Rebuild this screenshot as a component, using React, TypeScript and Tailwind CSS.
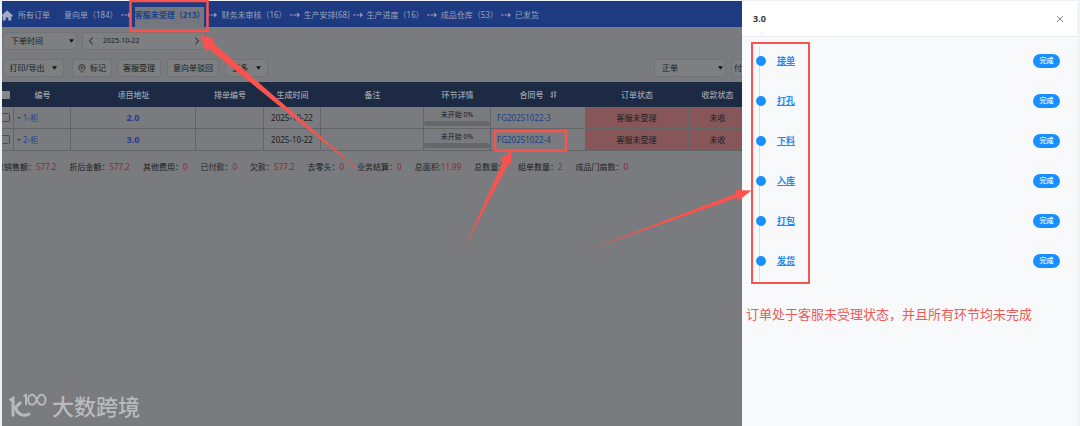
import { useState } from "react";

/**
 * Order management page with the process drawer open.
 * The list behind the drawer is shown in its dimmed colours.
 */

interface OrderRow {
  no:       string;
  address:  string;
  date:     string;
  contract: string;
}

const NAV_STEPS = [
  { label: "意向单（184）" },
  { label: "客服未受理（213）", active: true },
  { label: "财务未审核（16）" },
  { label: "生产安排(68)" },
  { label: "生产进度（16）" },
  { label: "成品仓库（53）" },
  { label: "已发货" },
];

const ORDERS: OrderRow[] = [
  { no: "1-柜", address: "2.0", date: "2025-10-22", contract: "FG20251022-3" },
  { no: "2-柜", address: "3.0", date: "2025-10-22", contract: "FG20251022-4" },
];

const TOTALS = [
  ["总销售额：", "577.2"],
  ["折后金额：", "577.2"],
  ["其他费用：", "0"],
  ["已付款：", "0"],
  ["欠款：", "577.2"],
  ["去零头：", "0"],
  ["业务结算：", "0"],
  ["总面积:", "11.99"],
  ["总数量:", "3"],
  ["组单数量：", "2"],
  ["成品门扇数：", "0"],
];

const PROCESS = ["接单", "打孔", "下料", "入库", "打包", "发货"];

function Caret({ className = "" }: { className?: string }) {
  return (
    <svg viewBox="0 0 6 4" className={`h-1 w-[5px] fill-[#151515] ${className}`} aria-hidden="true">
      <path d="M0 0h6L3 4z" />
    </svg>
  );
}

function StepArrow() {
  return (
    <svg viewBox="0 0 10 6" className="h-[6px] w-[10px] shrink-0" aria-hidden="true">
      <path d="M0 3h2.6M3.6 3h2.6" stroke="#98a3bd" strokeWidth="1" />
      <path d="M6.3 3h3.2M7.4 .9 9.6 3 7.4 5.1z" fill="#98a3bd" stroke="#98a3bd" strokeWidth=".5" />
    </svg>
  );
}

function TopNav() {
  return (
    <nav className="flex h-[26px] items-center bg-[#1e3a80] pt-[2px] text-[#98a3bd] whitespace-nowrap">
      <a href="#home" aria-label="首页" className="-ml-px w-[17px] shrink-0">
        <svg viewBox="0 0 12 11" className="h-[11px] w-3 fill-[#a3adc2]" aria-hidden="true">
          <path d="M6 .3 0 5.8l.8.9.9-.7v4.6h3V7.4h2.6v3.2h3V6l.9.7.8-.9z" />
        </svg>
      </a>
      <a href="#all" className="mr-[14px]">所有订单</a>
      <div className="flex items-center gap-[3px] self-stretch">
        {NAV_STEPS.map((step, i) => (
          <div key={step.label} className="flex items-center gap-1 self-stretch">
            {i > 0 && <StepArrow />}
            {step.active ? (
              <a href="#step" className="mt-[4px] flex items-center self-stretch bg-[#74777e] pb-1 font-bold text-[#1f3f8c]">
                {step.label}
              </a>
            ) : (
              <a href="#step">{step.label}</a>
            )}
          </div>
        ))}
      </div>
    </nav>
  );
}

const boxClass = "h-[18px] shrink-0 rounded-[2px] border border-[#717376] bg-[#7e7f80]";

function FilterSelect({ label, value, width }: { label: string; value: string; width: string }) {
  return (
    <div className={`relative ${width}`}>
      <select aria-label={label} className={`${boxClass} w-full appearance-none pl-[7px] text-[#1b1b1b]`}>
        <option>{value}</option>
      </select>
      <Caret className="pointer-events-none absolute right-[3px] top-[7px]" />
    </div>
  );
}

function Toolbar() {
  const [date, setDate] = useState("2025-10-22");
  const button = `${boxClass} flex items-center justify-center`;

  return (
    <div className="pt-[5px] pb-[5px] text-[#1b1b1b]">
      <div className="flex gap-[5px] pl-px">
        <FilterSelect label="时间类型" value="下单时间" width="w-[74px]" />
        <div className={`${boxClass} flex w-[124px] items-center px-[6px]`}>
          <button type="button" aria-label="前一天">
            <svg viewBox="0 0 4 8" className="h-2 w-1 fill-none stroke-[#1b1b1b]"><path d="M3.6.5.6 4l3 3.5" /></svg>
          </button>
          <input
            aria-label="日期"
            value={date}
            onChange={(e) => setDate(e.target.value)}
            className="ml-[10px] min-w-0 flex-1 text-[7px]"
          />
          <button type="button" aria-label="后一天">
            <svg viewBox="0 0 4 8" className="h-2 w-1 fill-none stroke-[#1b1b1b]"><path d="m.4.5 3 3.5-3 3.5" /></svg>
          </button>
        </div>
      </div>

      <div className="mt-[9px] flex whitespace-nowrap pl-px">
        <button type="button" className={`${button} w-[61px] gap-2`}>打印/导出 <Caret /></button>
        <button type="button" className={`${button} ml-2 w-10 gap-1`}>
          <svg viewBox="0 0 8 10" className="h-[9px] w-2 fill-none stroke-[#222]" strokeWidth=".8" aria-hidden="true">
            <path d="M4 9.300C2 7.300.6 5.600.6 3.900a3.400 3.400 0 0 1 6.800 0C7.400 5.600 6 7.300 4 9.300z" />
            <circle cx="4" cy="3.900" r="1.300" />
          </svg>
          标记
        </button>
        <button type="button" className={`${button} ml-[5px] w-[44px]`}>客服受理</button>
        <button type="button" className={`${button} ml-[6px] w-[52px]`}>意向单驳回</button>
        <button type="button" className={`${button} ml-[6px] w-[43px] gap-2`}>更多 <Caret /></button>
        <div className="ml-auto flex gap-[5px]">
          <FilterSelect label="订单类型" value="正单" width="w-[72px]" />
          <button type="button" className={`${boxClass} w-[11px] overflow-hidden rounded-r-none border-r-0 pl-[2px] text-left`}>付</button>
        </div>
      </div>
    </div>
  );
}

function OrderTable() {
  const cell = "h-[22px] border-r border-b border-[#626466] p-0";

  return (
    <table className="w-full table-fixed border-separate border-spacing-0 text-center text-[#202020]">
      <colgroup>
        <col className="w-[12px]" />
        <col className="w-[57px]" />
        <col className="w-[125px]" />
        <col className="w-[68px]" />
        <col className="w-[57px]" />
        <col />
        <col className="w-[67px]" />
        <col className="w-[94px]" />
        <col className="w-[104px]" />
        <col className="w-[53px]" />
      </colgroup>
      <thead className="bg-[#1c2a43] text-[#9da3ae]">
        <tr className="h-[25px]">
          <th className="p-0">
            <input type="checkbox" aria-label="全选" className="block h-2 w-2 appearance-none rounded-r-[1px] bg-[#85878a]" />
          </th>
          {["编号", "项目地址", "排单编号", "生成时间", "备注", "环节详情"].map((h) => (
            <th key={h} className="p-0 font-medium">{h}</th>
          ))}
          <th className="p-0 pr-1 font-medium">
            <button type="button" className="inline-flex items-center gap-[6px] pl-1">
              合同号
              <svg viewBox="0 0 8 8" className="h-[7px] w-[7px] fill-none stroke-[#b3b8c1]" aria-hidden="true">
                <path d="M2.500 .5v7M.6 5.500l1.900 2M5.500 7.500v-7M7.400 2.500l-1.900-2M1 2.500h1.500M5.500 5.500H7" />
              </svg>
            </button>
          </th>
          <th className="p-0 font-medium">订单状态</th>
          <th className="p-0 pl-1 font-medium whitespace-nowrap">收款状态</th>
        </tr>
      </thead>
      <tbody>
        {ORDERS.map((order) => (
          <tr key={order.no}>
            <td className={cell}>
              <input
                type="checkbox"
                aria-label={`选择 ${order.no}`}
                className="block h-[9px] w-2 appearance-none rounded-r-[2px] border border-l-0 border-[#4c4d4f]"
              />
            </td>
            <td className={`${cell} text-left`}>
              <button type="button" className="ml-[3px] flex items-center gap-[2px] text-[#2a3f8f]">
                <svg viewBox="0 0 4 2" className="h-[2px] w-1 fill-[#2a3f8f]" aria-hidden="true"><path d="M0 0h4L2 2z" /></svg>
                {order.no}
              </button>
            </td>
            <td className={`${cell} text-[9px] font-bold text-[#2a3a94]`}>{order.address}</td>
            <td className={cell} />
            <td className={cell}>{order.date}</td>
            <td className={cell} />
            <td className={cell}>
              <div className="text-[7px] leading-[12px]">未开始 0%</div>
              <div className="h-[5px] rounded-full bg-[#666769]" />
            </td>
            <td className={`${cell} border-r-0 text-left`}>
              <a href="#contract" className="ml-[6px] text-[#1d3f84]">{order.contract}</a>
            </td>
            <td className={`${cell} border-[#754d4f] bg-[#875659]`}>客服未受理</td>
            <td className={`${cell} border-r-0 border-[#754d4f] bg-[#875659] pl-1`}>未收</td>
          </tr>
        ))}
      </tbody>
    </table>
  );
}

function Watermark() {
  return (
    <div className="mt-auto flex items-center gap-[5px] pb-[7px] pl-[7px] text-[#b9babd]">
      <svg viewBox="0 0 38 26" className="h-[26px] w-[38px] fill-none stroke-current" strokeWidth="3" aria-hidden="true">
        <path d="M.8 7.500 4 5.500v18" />
        <path d="M12 9 6.500 14.500C8.500 21.500 14.500 24.500 21 20.500" />
        <path d="M14.500 3.200 17 1.900v10.200" strokeWidth="1.900" />
        <path d="M27.800 6.800c-1.400-3.200-2.700-5-4.700-5-2.400 0-4 2.200-4 5s1.600 5 4 5c2 0 3.300-1.800 4.700-5zm0 0c1.400-3.200 2.700-5 4.700-5 2.400 0 4 2.200 4 5s-1.600 5-4 5c-2 0-3.300-1.800-4.700-5z" strokeWidth="1.900" />
      </svg>
      <span className="text-[22px] leading-[26px] font-medium">大数跨境</span>
    </div>
  );
}

function ProcessDrawer() {
  return (
    <aside className="mt-px flex w-[338px] shrink-0 flex-col border-r-[3px] border-[#f1f3f5] bg-[#f8f9fb]">
      <header className="flex h-9 items-center justify-between border-b border-[#e8eaed] bg-white pr-[13px] pl-[11px]">
        <h2 className="text-[9px] font-bold text-[#333]">3.0</h2>
        <button type="button" aria-label="关闭">
          <svg viewBox="0 0 8 8" className="h-2 w-2 fill-none stroke-[#888]" aria-hidden="true">
            <path d="m1 1 6 6M7 1 1 7" />
          </svg>
        </button>
      </header>

      {/* Process steps */}
      <div className="px-[17px] pt-[9px]">
        <ul className="flex flex-col gap-[26px] border-l border-[#d9dbde] pt-2 pb-[13px]">
          {PROCESS.map((name) => (
            <li key={name} className="flex h-[14px] items-center">
              <span className="-ml-1 h-[10px] w-[10px] rounded-full bg-[#1890ff]" />
              <a href="#process" className="ml-[11px] text-[9px] font-bold text-[#1e8cf0] underline">{name}</a>
              <button type="button" className="ml-auto h-[14px] w-[27px] rounded-full bg-[#1890ff] text-[7px] leading-[14px] font-medium text-white">
                完成
              </button>
            </li>
          ))}
        </ul>
      </div>

      <p className="mt-[23px] ml-1 text-[13px] leading-5 whitespace-nowrap text-[#ee5a58]">
        订单处于客服未受理状态，并且所有环节均未完成
      </p>
    </aside>
  );
}

/* Red boxes and arrows drawn over the page */
function Annotations() {
  return (
    <svg className="pointer-events-none absolute top-0 left-0" width="1080" height="426" viewBox="0 0 1080 426" aria-hidden="true">
      <g fill="none" stroke="#f9534f">
        <rect x="130.500" y="1" width="77" height="30" strokeWidth="2.500" />
        <rect x="495" y="131" width="71" height="19.500" strokeWidth="2.500" />
        <rect x="752" y="43" width="57" height="240" strokeWidth="2" />
      </g>
      <g fill="#f9534f">
        <path d="M200 35 215 39 212.800 42.600 369 178.500 208.300 48.500 206 51.500z" />
        <path d="M511 151 511.500 165 508.500 163.500 464 248.500 503 161.500 499.500 160z" />
        <path d="M751.500 190.500 738 201 737 197.800 588 249.700 736 193.500 735.500 190z" />
      </g>
    </svg>
  );
}

export default function App() {
  return (
    <div className="relative flex min-h-screen overflow-hidden bg-[#eef1f6] font-['Noto_Sans','Noto_Sans_CJK_SC',sans-serif] text-[8px] leading-3">
      <main className="mt-px ml-[2px] flex min-w-0 flex-1 flex-col overflow-hidden bg-[#797b7e]">
        <TopNav />
        <Toolbar />
        <OrderTable />
        <div className="-ml-[6px] flex gap-[13px] pt-[10px] whitespace-nowrap text-[#202020]">
          {TOTALS.map(([label, value]) => (
            <span key={label}>
              {label}
              <span className="text-[#8f2b2e]">{value}</span>
            </span>
          ))}
        </div>
        <Watermark />
      </main>
      <ProcessDrawer />
      <Annotations />
    </div>
  );
}
